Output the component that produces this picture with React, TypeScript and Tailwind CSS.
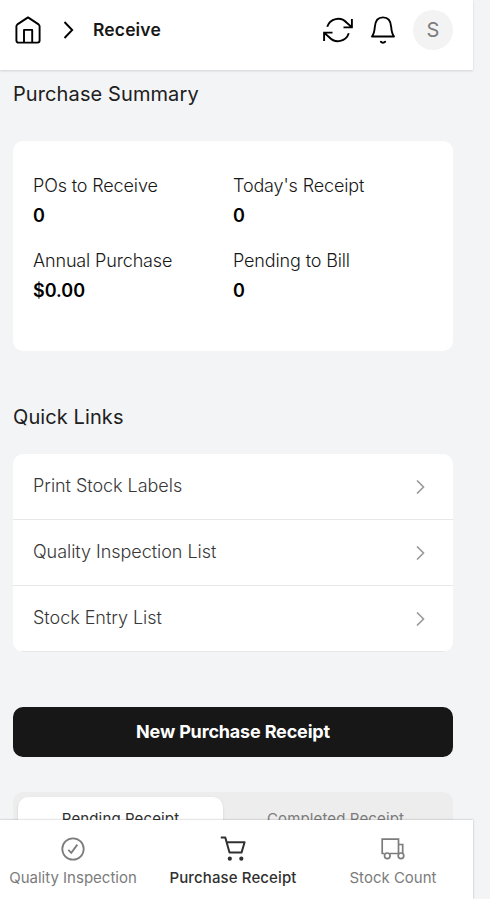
import type { ReactNode } from 'react'

const stats = [
  { label: 'POs to Receive', value: '0' },
  { label: "Today's Receipt", value: '0' },
  { label: 'Annual Purchase', value: '$0.00' },
  { label: 'Pending to Bill', value: '0' },
]

const quickLinks = ['Print Stock Labels', 'Quality Inspection List', 'Stock Entry List']

function HomeIcon() {
  return (
    <svg width="26" height="28" viewBox="0 0 26 28" fill="none" stroke="#000" strokeWidth="1.9" strokeLinejoin="round">
      <path d="M1.4 10.400c0-.9.3-1.500 1-2L13 1.400l10.600 7c.7.5 1 1.100 1 2v14.200a2 2 0 0 1-2 2H3.400a2 2 0 0 1-2-2Z" />
      <path d="M9 26.500V13.900h8.200v12.600" />
    </svg>
  )
}

function RefreshIcon() {
  return (
    <svg width="30" height="26" viewBox="0 0 30 26" fill="none" stroke="#000" strokeWidth="1.9">
      <path d="M4.200 9.700A11.500 11.500 0 0 1 23.500 5.500l5.200 4.600M28.900 2v8.400h-8.400" />
      <path d="M25.800 16.300A11.500 11.500 0 0 1 6.500 20.500l-5.200-4.600M1.100 24v-8.400h8.400" />
    </svg>
  )
}

function BellIcon() {
  return (
    <svg width="24" height="28" viewBox="0 0 24 28" fill="none" stroke="#000" strokeWidth="1.9" strokeLinecap="round" strokeLinejoin="round">
      <path d="M1 20.500h22c-1.700-2.200-2.400-4-2.800-9.500C19.800 4.800 17.700 1.400 12 1.400S4.200 4.800 3.800 11C3.400 16.500 2.700 18.300 1 20.500Z" />
      <path d="M9.800 25.700c1 1.300 3.400 1.300 4.400 0" />
    </svg>
  )
}

function CheckIcon() {
  return (
    <svg width="24" height="24" viewBox="0 0 24 24" fill="none" stroke="currentColor" strokeWidth="1.8">
      <circle cx="12" cy="12" r="10.700" />
      <path d="m7.300 12.900 3 3 6-8.300" />
    </svg>
  )
}

function CartIcon() {
  return (
    <svg width="26" height="26" viewBox="0 0 26 26" fill="none" stroke="currentColor" strokeWidth="2" strokeLinejoin="round">
      <path d="M.8 1.500h4.500l4.200 15.100h12L24.600 6.200H6.600" />
      <circle cx="9.800" cy="22.700" r="2.100" fill="currentColor" stroke="none" />
      <circle cx="21.300" cy="22.700" r="2.100" fill="currentColor" stroke="none" />
    </svg>
  )
}

function TruckIcon() {
  return (
    <svg width="24" height="22" viewBox="0 0 24 22" fill="none" stroke="currentColor" strokeWidth="1.700">
      <path d="M3.500 15.500H1.200V1.200h16.300v14.300H9M17.500 6.500h4.200v8.700" />
      <circle cx="6.300" cy="17.800" r="2.800" />
      <circle cx="20" cy="17.800" r="2.800" />
    </svg>
  )
}

function Tab({ label, icon, active }: { label: string; icon: ReactNode; active?: boolean }) {
  return (
    <button
      className={`flex w-40 flex-col items-center whitespace-nowrap text-[15px] leading-5 ${
        active ? 'font-medium tracking-[0.12px] text-[#303030]' : 'text-[#7c7c7c]'
      }`}
    >
      <span className="mb-1.5 flex h-[27px] items-center">{icon}</span>
      {label}
    </button>
  )
}

export default function App() {
  return (
    <div className="h-[899px] overflow-hidden bg-[#f3f4f6] font-['Inter',sans-serif]">
      <div className="relative flex h-full w-[473px] flex-col">
        <header className="flex h-[70px] shrink-0 items-center bg-white pr-5 pb-2.5 pl-[15px] shadow-[0_1px_2px_rgba(0,0,0,0.15)]">
          <HomeIcon />
          <svg className="ml-[22px]" width="11" height="18" viewBox="0 0 11 18" fill="none" stroke="#000" strokeWidth="1.900">
            <path d="m1.500 1 7.700 8-7.700 8" />
          </svg>
          <h1 className="ml-[19px] pt-px text-[17.500px] font-semibold tracking-[0.13px] text-[#171717]">Receive</h1>
          <div className="ml-auto flex items-center">
            <RefreshIcon />
            <span className="ml-[18px]">
              <BellIcon />
            </span>
            <span className="ml-[18px] flex size-10 items-center justify-center rounded-full bg-[#f3f3f3] text-xl text-[#7c7c7c]">
              S
            </span>
          </div>
        </header>

        <main className="flex-1 overflow-hidden pr-5 pl-[13px]">
          <h2 className="pt-2.5 text-xl leading-7 tracking-[0.1px] text-[#202020]">Purchase Summary</h2>
          <section className="mt-[33px] grid h-[210px] grid-cols-[200px_200px] content-start gap-y-[15px] rounded-[10px] bg-white px-5 pt-[30px]">
            {stats.map((stat) => (
              <div key={stat.label} className="h-[60px] text-lg leading-[30px]">
                <p className="font-light tracking-[-0.14px] text-[#171717]">{stat.label}</p>
                <p className="font-semibold text-black">{stat.value}</p>
              </div>
            ))}
          </section>

          <h2 className="mt-[52px] text-xl leading-7 tracking-[0.1px] text-[#202020]">Quick Links</h2>
          <nav className="mt-[23px] overflow-hidden rounded-[10px] bg-white">
            {quickLinks.map((link) => (
              <a key={link} className="flex h-[66px] items-center justify-between border-b border-[#e8e8e8] pr-7 pl-5">
                <span className="pb-0.5 text-lg font-light tracking-[-0.04px] text-[#383838]">{link}</span>
                <svg width="9" height="14" viewBox="0 0 9 14" fill="none" stroke="#999" strokeWidth="1.600">
                  <path d="m1 .5 6.500 6.500L1 13.500" />
                </svg>
              </a>
            ))}
          </nav>

          <button className="mt-[55px] block h-[50px] w-full rounded-[10px] bg-[#171717] text-lg font-bold tracking-[-0.17px] text-white">
            New Purchase Receipt
          </button>

          <div className="mt-[35px] flex h-[60px] rounded-[10px] bg-[#ededed] p-[5px] text-[15px] tracking-[0.13px]">
            <button className="w-[205px] rounded-[10px] bg-white pb-1.5 text-[#303030] shadow">Pending Receipt</button>
            <button className="flex-1 pb-1.5 text-[#7c7c7c]">Completed Receipt</button>
          </div>
        </main>

        {/* Bottom tab bar, over the scrolled content */}
        <footer className="absolute bottom-0 left-0 flex h-[79px] w-full bg-white pt-[15px] shadow-[0_0_2px_rgba(0,0,0,0.3)]">
          <div className="-ml-[7px] flex">
            <Tab label="Quality Inspection" icon={<CheckIcon />} />
            <Tab label="Purchase Receipt" icon={<CartIcon />} active />
            <Tab label="Stock Count" icon={<TruckIcon />} />
          </div>
        </footer>
      </div>
    </div>
  )
}
